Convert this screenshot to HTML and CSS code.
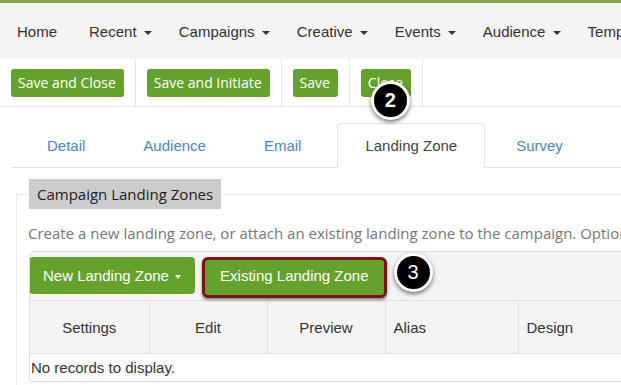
FILE: index.html
```html
<!DOCTYPE html>
<html lang="en">
<head>
  <meta charset="UTF-8" />
  <title>Campaign - Landing Zone</title>
  <link rel="stylesheet" href="styles.css">
</head>
<body>
  <div class="topbar"></div>

  <nav class="nav">
    <a class="nav-item">Home</a>
    <a class="nav-item">Recent <span class="caret"></span></a>
    <a class="nav-item">Campaigns <span class="caret"></span></a>
    <a class="nav-item">Creative <span class="caret"></span></a>
    <a class="nav-item">Events <span class="caret"></span></a>
    <a class="nav-item">Audience <span class="caret"></span></a>
    <a class="nav-item">Templates <span class="caret"></span></a>
  </nav>

  <div class="toolbar">
    <div class="tool-group"><button class="btn">Save and Close</button></div>
    <div class="tool-group"><button class="btn">Save and Initiate</button></div>
    <div class="tool-group"><button class="btn">Save</button></div>
    <div class="tool-group">
      <button class="btn">Close</button>
      <span class="badge badge-close">2</span>
    </div>
  </div>

  <ul class="tabs">
    <li><a>Detail</a></li>
    <li><a>Audience</a></li>
    <li class="before-active"><a>Email</a></li>
    <li class="active"><a>Landing Zone</a></li>
    <li class="after-active"><a>Survey</a></li>
  </ul>

  <fieldset class="panel">
    <legend>Campaign Landing Zones</legend>
    <p class="panel-text">Create a new landing zone, or attach an existing landing zone to the campaign. Optionally set an alias for each one.</p>

    <div class="grid">
      <div class="grid-toolbar">
        <button class="btn btn-lg">New Landing Zone <span class="caret"></span></button>
        <button class="btn btn-lg btn-marked">Existing Landing Zone</button>
        <span class="badge badge-inline">3</span>
      </div>
      <table class="grid-table">
        <thead>
          <tr>
            <th class="col-center col-settings">Settings</th>
            <th class="col-center col-edit">Edit</th>
            <th class="col-center col-preview">Preview</th>
            <th class="col-alias">Alias</th>
            <th class="col-design">Design</th>
          </tr>
        </thead>
        <tbody>
          <tr>
            <td colspan="5" class="empty">No records to display.</td>
          </tr>
        </tbody>
      </table>
    </div>
  </fieldset>
</body>
</html>
```

FILE: styles.css
```css
* {
  box-sizing: border-box;
  margin: 0;
  padding: 0;
}

body {
  width: 621px;
  height: 385px;
  overflow: hidden;
  background: #fff;
  color: #333;
  font-family: 'Liberation Sans', Arial, sans-serif;
  font-size: 15px;
}

.topbar {
  height: 3px;
  background: #87a94c;
}

.nav {
  display: flex;
  align-items: center;
  height: 56px;
  padding-left: 1px;
  background: #f4f4f4;
  white-space: nowrap;
  overflow: hidden;
}

.nav-item {
  flex-shrink: 0;
  padding: 0 16px;
  color: #333;
  font-size: 15px;
}

.caret {
  display: inline-block;
  width: 0;
  height: 0;
  margin-left: 3px;
  vertical-align: middle;
  border-top: 4px solid currentColor;
  border-left: 4px solid transparent;
  border-right: 4px solid transparent;
}

.nav-item .caret {
  margin-right: -5px;
}

.toolbar {
  display: flex;
  height: 48px;
  border-bottom: 1px solid #e6e6e6;
}

.tool-group {
  position: relative;
  display: flex;
  align-items: center;
  padding: 0 11px;
  border-right: 1px solid #e6e6e6;
}

.btn {
  height: 28px;
  padding: 0 8px 0 7px;
  border: none;
  border-radius: 3px;
  background: #65a22c;
  color: #fff;
  font-family: 'Open Sans', sans-serif;
  font-size: 14px;
  line-height: 28px;
  white-space: nowrap;
}

.badge {
  display: flex;
  align-items: center;
  justify-content: center;
  width: 39px;
  height: 39px;
  border: 3px solid #fff;
  border-radius: 50%;
  background: #000;
  color: #fff;
  font-family: 'Liberation Sans', Arial, sans-serif;
  font-size: 20px;
  box-shadow: 0 2px 4px rgba(0, 0, 0, 0.55);
  z-index: 10;
}

.badge-close {
  position: absolute;
  left: 21px;
  top: 22px;
  font-weight: bold;
}

.tabs {
  display: flex;
  list-style: none;
  margin: 16px 0 0 11px;
  padding-left: 7px;
  border-bottom: 1px solid #e3e3e3;
}

.tabs li {
  margin-bottom: -1px;
}

.tabs li.before-active {
  margin-right: 7px;
}

.tabs li.after-active {
  margin-left: 2px;
}

.tabs a {
  display: block;
  height: 45px;
  padding: 0 28px;
  border: 1px solid transparent;
  border-radius: 4px 4px 0 0;
  color: #4a87c5;
  line-height: 43px;
  white-space: nowrap;
}

.tabs .active a {
  padding: 0 27px;
  border-color: #e3e3e3;
  border-bottom-color: #fff;
  color: #444;
}

.panel {
  width: 720px;
  min-width: 0;
  margin: 11px 0 0 16px;
  padding: 0 0 20px 12px;
  border: 1px solid #ececec;
}

.panel legend {
  height: 30px;
  padding: 0 8px;
  background: #cccccc;
  color: #222;
  font-family: 'Open Sans', sans-serif;
  font-size: 15px;
  line-height: 30px;
}

.panel-text {
  margin: 14px 0 8px -1px;
  color: #777;
  font-family: 'Open Sans', sans-serif;
  font-size: 15px;
  line-height: 20px;
  white-space: nowrap;
}

.grid {
  border: 1px solid #dddddd;
  border-radius: 4px;
  overflow: hidden;
}

.grid-toolbar {
  display: flex;
  align-items: flex-start;
  gap: 7px;
  height: 48px;
  padding-top: 5px;
  margin-left: -1px;
  background: #f4f4f4;
}

.btn-lg {
  height: 37px;
  padding: 0 14px;
  border-radius: 4px;
  font-family: 'Liberation Sans', Arial, sans-serif;
  font-size: 15px;
  line-height: 37px;
}

.btn-lg .caret {
  margin-left: 2px;
  border-left-width: 3.5px;
  border-right-width: 3.5px;
}

.btn-marked {
  height: 41px;
  padding: 0 15px 3px;
  border: 3px solid #7c1215;
  border-radius: 6px;
  line-height: 32px;
  box-shadow: 0 2px 3px rgba(0, 0, 0, 0.45);
}

.badge-inline {
  margin-top: -4px;
}

.grid-table {
  width: 100%;
  border-collapse: collapse;
  table-layout: fixed;
}

.grid-table th {
  height: 53px;
  padding: 0 8px;
  background: #f4f4f4;
  border-top: 1px solid #e2e2e2;
  border-right: 1px solid #e2e2e2;
  border-bottom: 1px solid #e2e2e2;
  color: #333;
  font-weight: normal;
  text-align: left;
}

.grid-table th.col-center {
  text-align: center;
}

.col-settings { width: 119px; }
.col-edit { width: 118px; }
.col-preview { width: 118px; }
.col-alias { width: 133px; }

.empty {
  height: 27px;
  padding: 0 0 0 1px;
  color: #333;
  line-height: 27px;
}
```
